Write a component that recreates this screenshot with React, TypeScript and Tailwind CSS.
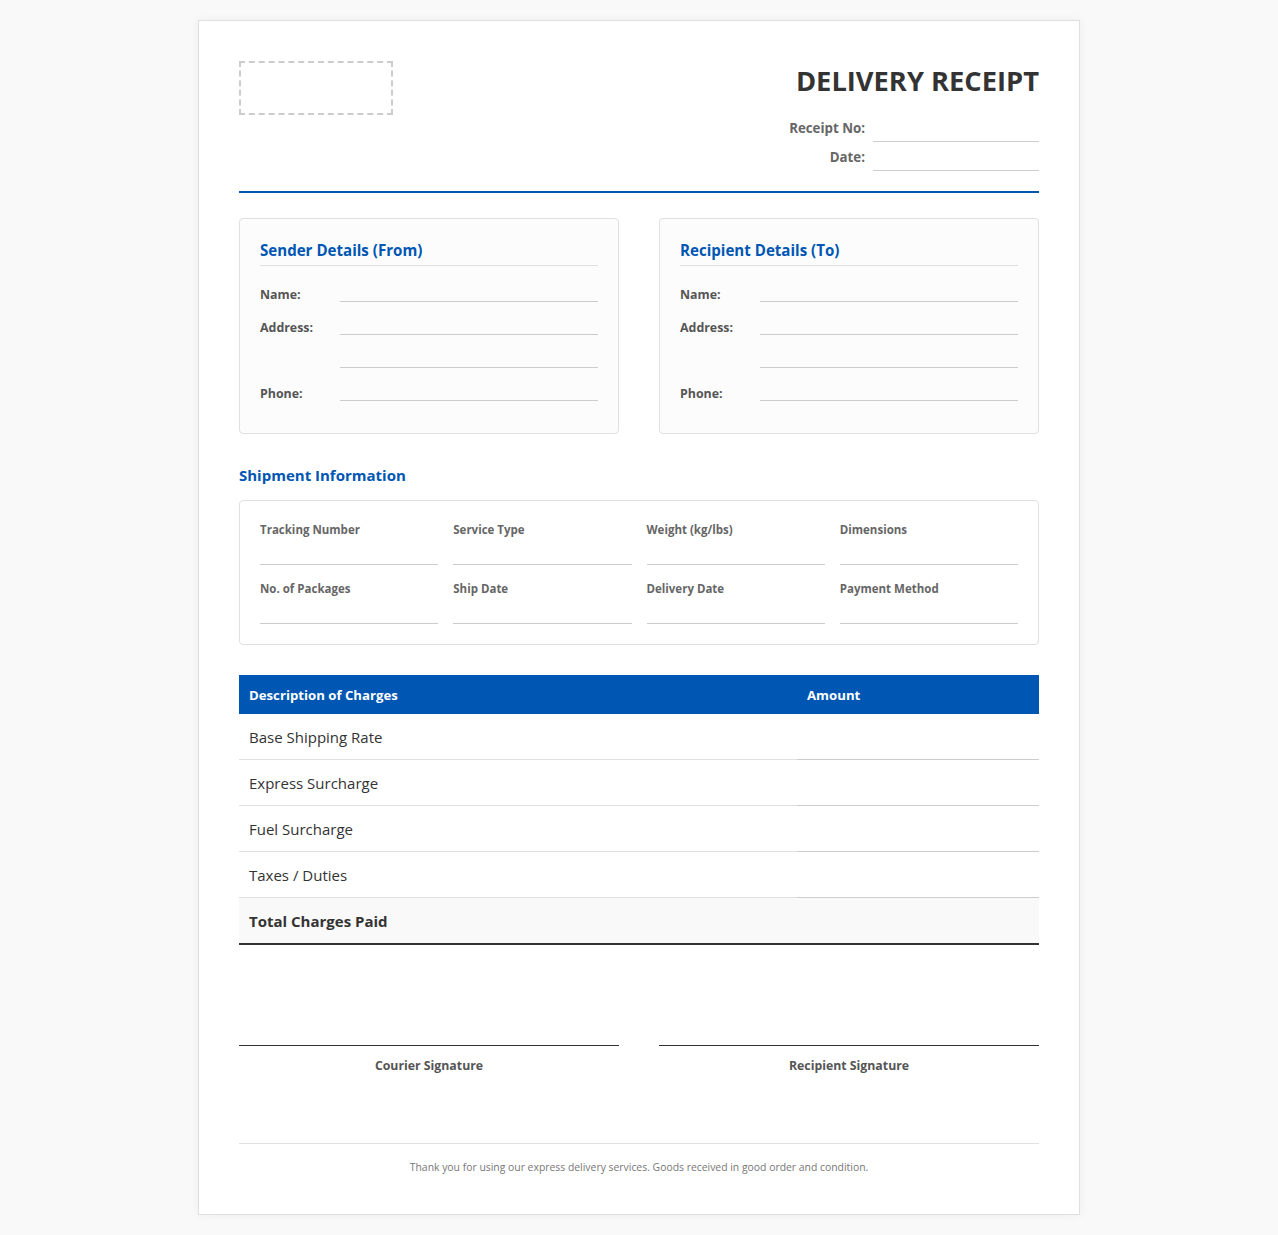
const font = "font-['Open_Sans',_'Noto_Sans',_sans-serif]";

function PartyField({ label }: { label: string }) {
  return (
    <div className="flex h-[33px] items-end">
      <span className="h-full w-20 pt-[17px] text-[12.4px] leading-[18px] font-bold text-[#555]">{label}</span>
      <span className="flex-1 border-b border-[#ccc]" />
    </div>
  );
}

function PartyCard({ title }: { title: string }) {
  return (
    <div className="h-[216px] rounded border border-[#e0e0e0] bg-[#fcfcfc] px-5 pt-5">
      <h3 className="h-[27px] border-b border-[#e0e0e0] text-[15.1px] leading-[22px] font-bold text-[#0056b3]">{title}</h3>
      <div className="mt-[3px]">
        <PartyField label="Name:" />
        <PartyField label="Address:" />
        <PartyField label="" />
        <PartyField label="Phone:" />
      </div>
    </div>
  );
}

function ShipField({ label }: { label: string }) {
  return (
    <div className="h-[44px] border-b border-[#ccc] pt-[1px] text-[11.5px] leading-[16px] font-bold text-[#666]">{label}</div>
  );
}

function ChargeRow({ label }: { label: string }) {
  return (
    <tr>
      <td className="h-[46px] border-b border-[#e0e0e0] px-[10px] pt-[2px] text-[15px] text-[#333]">{label}</td>
      <td className="border-b border-[#ccc]" />
    </tr>
  );
}

export default function App() {
  const charges = ["Base Shipping Rate", "Express Surcharge", "Fuel Surcharge", "Taxes / Duties"];
  const ship = [
    "Tracking Number", "Service Type", "Weight (kg/lbs)", "Dimensions",
    "No. of Packages", "Ship Date", "Delivery Date", "Payment Method",
  ];

  return (
    <div className={`min-h-[1235px] bg-[#f9f9f9] py-5 ${font}`}>
      <div className="mx-auto h-[1195px] w-[882px] border border-[#e0e0e0] bg-white p-10 shadow-[0_0_10px_rgba(0,0,0,0.05)]">
        <header className="flex h-[132px] justify-between border-b-2 border-[#0056b3]">
          <div className="h-[54px] w-[154px] border-2 border-dashed border-[#ccc]" />
          <div className="w-[300px]">
            <h1 className="mt-[1px] text-right text-[27.3px] leading-[38px] font-bold text-[#333]">DELIVERY RECEIPT</h1>
            <div className="mt-[13px] flex h-[29px] items-end justify-end gap-2">
              <span className="h-full pt-[6px] text-[13.3px] leading-[18px] font-bold text-[#666]">Receipt No:</span>
              <span className="w-[166px] border-b border-[#ccc]" />
            </div>
            <div className="flex h-[29px] items-end justify-end gap-2">
              <span className="h-full pt-[6px] text-[13.3px] leading-[18px] font-bold text-[#666]">Date:</span>
              <span className="w-[166px] border-b border-[#ccc]" />
            </div>
          </div>
        </header>

        <section className="mt-[25px] grid grid-cols-2 gap-10">
          <PartyCard title="Sender Details (From)" />
          <PartyCard title="Recipient Details (To)" />
        </section>

        <h2 className="mt-[29px] mb-[13px] text-[15px] leading-[24px] font-bold text-[#0056b3]">Shipment Information</h2>
        <section className="grid h-[145px] grid-cols-4 content-start gap-x-[15px] gap-y-[15px] rounded border border-[#e0e0e0] px-5 pt-[20px]">
          {ship.map((s) => (
            <ShipField key={s} label={s} />
          ))}
        </section>

        <table className="mt-[30px] w-full table-fixed border-separate border-spacing-0">
          <thead>
            <tr className="bg-[#0056b3] text-[13.2px] font-bold text-white">
              <th className="h-[39px] px-[10px] pt-[3px] text-left">Description of Charges</th>
              <th className="w-[242px] px-[10px] pt-[3px] text-left">Amount</th>
            </tr>
          </thead>
          <tbody>
            {charges.map((c) => (
              <ChargeRow key={c} label={c} />
            ))}
            <tr className="bg-[#f9f9f9]">
              <td className="h-[47px] border-b-2 border-[#333] px-[10px] pt-[2px] text-[15px] font-bold text-[#333]">Total Charges Paid</td>
              <td className="border-b-2 border-[#333]" />
            </tr>
          </tbody>
        </table>

        <section className="mt-[100px] grid grid-cols-2 gap-10">
          {["Courier Signature", "Recipient Signature"].map((s) => (
            <div key={s} className="border-t border-[#333] pt-[11px] text-center text-[12.3px] leading-[17px] font-bold text-[#555]">
              {s}
            </div>
          ))}
        </section>

        <footer className="mt-[69px] border-t border-[#e0e0e0] pt-[15px] text-center text-[10.4px] leading-[16px] text-[#777]">
          Thank you for using our express delivery services. Goods received in good order and condition.
        </footer>
      </div>
    </div>
  );
}
